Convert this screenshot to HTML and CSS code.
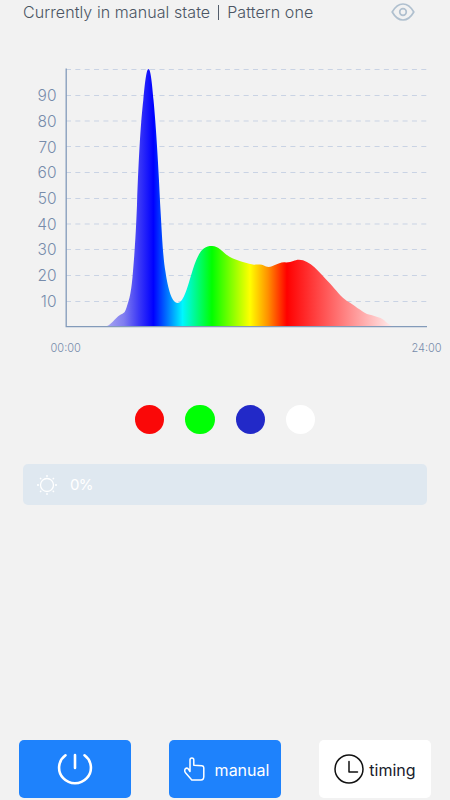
FILE: index.html
```html
<!DOCTYPE html>
<html lang="en">
  <head>
    <meta charset="UTF-8" />
    <meta name="viewport" content="width=device-width, initial-scale=1.0" />
    <title>Light control</title>
    <link rel="stylesheet" href="styles.css" />
  </head>
  <body>
    <div class="container">
      <header class="header">
        <span class="status">Currently in manual state<i class="divider"></i>Pattern one</span>
        <svg class="eye" width="24" height="18" viewBox="0 0 24 18">
          <path d="M1.2 9C4.5 3.2 8.2 1 12 1s7.500 2.200 10.800 8C19.500 14.800 15.800 17 12 17S4.500 14.800 1.200 9Z" />
          <circle cx="12" cy="9" r="3.300" />
        </svg>
      </header>

      <!-- Spectrum chart -->
      <svg class="chart" width="450" height="300" viewBox="0 60 450 300">
        <defs>
          <linearGradient id="spectrum" gradientUnits="userSpaceOnUse" x1="100" y1="0" x2="400" y2="0">
            <stop offset="0" stop-color="#b5b5f2" />
            <stop offset="0.080" stop-color="#7f7cf0" />
            <stop offset="0.130" stop-color="#3b38f6" />
            <stop offset="0.178" stop-color="#0000ff" />
            <stop offset="0.275" stop-color="#00f6ff" />
            <stop offset="0.373" stop-color="#00ff00" />
            <stop offset="0.500" stop-color="#ffff00" />
            <stop offset="0.560" stop-color="#ff9000" />
            <stop offset="0.623" stop-color="#ff0000" />
            <stop offset="0.980" stop-color="#fff0f0" />
          </linearGradient>
        </defs>
        <g class="grid">
          <path d="M66 69.500H427M66 95.500H427M66 121H427M66 146.500H427M66 172.500H427M66 198.500H427M66 224H427M66 249.500H427M66 275.500H427M66 301.500H427" />
        </g>
        <path
          fill="url(#spectrum)"
          d="M104 327C111 326 115 318 120 315C124 313 125 313 127 306C131 295 132 284 133.500 265C136 235 136.500 215 137 205C139 150 141 120 143.300 100C145 82 146.500 69 148.500 69S152 82 153.500 100C156 125 159 175 160.500 210C162 235 163 258 165.500 272C168 289 172 303 177.500 303C184 303 188 285 193 269C199 251 203 246 212 246C220 246 224 255 233 258.500C240 261 248 264 254 264.700C260 264.500 262 264.500 266 266.500C272 268.500 276 263 284 262.300C292 263 295 259.500 299 259.800C310 260 319 272 330 283.500C336 290 341 297 347 301C354 305 361 311 367 314C374 316 380 317 384 320C388 324 391 326 398 327Z"
        />
        <path class="axis" d="M66.200 68.500V326.700H427" />
        <g class="y-labels">
          <text x="56.500" y="101">90</text>
          <text x="56.500" y="126.800">80</text>
          <text x="56.500" y="152.500">70</text>
          <text x="56.500" y="178.200">60</text>
          <text x="56.500" y="204">50</text>
          <text x="56.500" y="229.700">40</text>
          <text x="56.500" y="255.400">30</text>
          <text x="56.500" y="281.200">20</text>
          <text x="56.500" y="307">10</text>
        </g>
        <g class="x-labels">
          <text x="65.700" y="352">00:00</text>
          <text x="426.500" y="352">24:00</text>
        </g>
      </svg>

      <!-- Channel colors -->
      <div class="colors">
        <span class="color red"></span>
        <span class="color green"></span>
        <span class="color blue"></span>
        <span class="color white"></span>
      </div>

      <!-- Brightness -->
      <div class="brightness">
        <svg class="sun" width="22" height="22" viewBox="0 0 22 22">
          <circle cx="11" cy="11" r="6.500" />
          <path d="M11 1v2M11 19v2M1 11h2M19 11h2M4 4l1.300 1.300M16.700 16.700L18 18M4 18l1.300-1.300M16.700 5.300L18 4" />
        </svg>
        <span>0%</span>
      </div>

      <nav class="buttons">
        <div class="button primary">
          <svg class="power" width="36" height="36" viewBox="0 0 36 36">
            <path d="M8.500 4.300A15.900 15.500 0 1 0 27.500 4.300M18 4V17" />
          </svg>
        </div>
        <div class="button primary manual">
          <svg class="hand" width="22" height="26" viewBox="0 0 22 26">
            <path d="M7 15.500V4Q7 2 8.900 2T10.800 4V9.300L19 9.800Q20.800 10 20.800 11.800V20.500Q20.800 24 18 24H8.800L2.300 16.500Q1.200 14.500 2.200 12.800Q3.800 11.500 5.200 12.800L7 15.500" />
          </svg>
          <span>manual</span>
        </div>
        <div class="button timing">
          <svg class="clock" width="30" height="30" viewBox="0 0 30 30">
            <circle cx="15" cy="15" r="14" />
            <path d="M15 7.500V18H23.500" />
          </svg>
          <span>timing</span>
        </div>
      </nav>
    </div>
  </body>
</html>
```
FILE: styles.css
```css
* {
  margin: 0;
  padding: 0;
  box-sizing: border-box;
}

body {
  background: #f2f2f2;
  font-family: Inter, sans-serif;
  overflow: hidden;
}

.container {
  display: flex;
  flex-direction: column;
  width: 450px;
  height: 800px;
}

svg {
  display: block;
  flex: none;
}

/* Header */
.header {
  display: flex;
  justify-content: space-between;
  align-items: center;
  height: 24px;
  padding: 0 35px 0 23px;
  color: #4b5563;
  font-size: 16px;
}

.status {
  display: flex;
  align-items: center;
  white-space: nowrap;
  font-weight: 300;
  letter-spacing: 0.080px;
}

.divider {
  width: 1px;
  height: 15px;
  margin: 0 8px;
  background: #535d6b;
}

.eye {
  fill: none;
  stroke: #b0c0cf;
  stroke-width: 1.700;
}

/* Chart */
.chart {
  margin-top: 36px;
}

.grid {
  fill: none;
  stroke: #c9d3e4;
  stroke-width: 1;
  stroke-dasharray: 5 4.350;
}

.axis {
  fill: none;
  stroke: #839bba;
  stroke-width: 1.300;
}

.y-labels {
  fill: #778cab;
  font-size: 15.500px;
  font-weight: 300;
  text-anchor: end;
}

.x-labels {
  fill: #778cab;
  font-size: 11px;
  font-weight: 300;
  text-anchor: middle;
}

/* Channel colors */
.colors {
  display: flex;
  justify-content: center;
  gap: 21px;
  height: 30px;
  margin-top: 45px;
}

.color {
  width: 29.300px;
  height: 29.300px;
  border-radius: 50%;
}

.red {
  background: #fa0808;
}

.green {
  background: #00ff05;
}

.blue {
  background: #2229c8;
}

.white {
  background: #fff;
}

/* Brightness bar */
.brightness {
  display: flex;
  align-items: center;
  gap: 12px;
  height: 41px;
  margin: 29px 23px 0;
  padding-left: 13px;
  border-radius: 5px;
  background: #dfe8f0;
  color: #fff;
  font-size: 15px;
  letter-spacing: -0.600px;
}

.sun {
  fill: none;
  stroke: #fff;
  stroke-width: 1.300;
}

/* Bottom buttons */
.buttons {
  display: flex;
  justify-content: space-between;
  margin-top: auto;
  padding: 0 19px 2px;
}

.button {
  display: flex;
  justify-content: center;
  align-items: center;
  width: 112px;
  height: 58px;
  border-radius: 5px;
  font-size: 16px;
}

.button span {
  padding-top: 2px;
}

.primary {
  background: #1e82fc;
  color: #fff;
}

.manual {
  gap: 10px;
  padding-left: 2px;
}

.timing {
  gap: 5px;
  background: #fff;
  color: #17202b;
}

.power,
.hand,
.clock {
  fill: none;
  stroke: #fff;
  stroke-linecap: round;
  stroke-linejoin: round;
}

.power {
  stroke-width: 2.600;
}

.hand {
  stroke-width: 1.500;
}

.clock {
  stroke: #111;
  stroke-width: 1.500;
}
```
